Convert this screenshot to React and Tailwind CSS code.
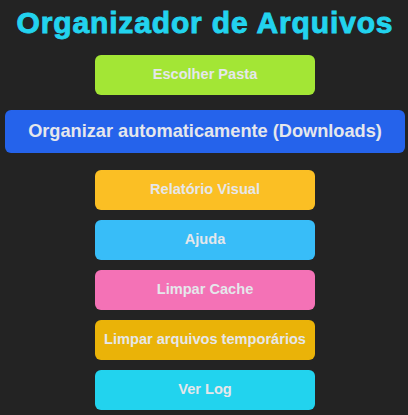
export default function App() {
  const btn =
    "w-[220px] h-10 rounded-md text-[14.6px] font-bold text-[#e5e7eb] flex items-center justify-center";
  return (
    <div className="w-[408px] h-[415px] bg-[#232323] flex flex-col items-center pt-[4px] pl-[2px]" style={{ fontFamily: '"Liberation Sans", Arial, sans-serif' }}>
      <h1 className="h-[38px] text-[30px] leading-[38px] font-bold text-[#22d3ee] tracking-[0.85px] [-webkit-text-stroke:0.9px_#22d3ee]">Organizador de Arquivos</h1>
      <button className={`${btn} mt-[13px] bg-[#a3e635]`}>Escolher Pasta</button>
      <button className="mt-[15px] w-[400px] h-[43px] rounded-md bg-[#2563eb] text-[18.2px] font-bold text-[#e5e7eb] flex items-center justify-center">
        Organizar automaticamente (Downloads)
      </button>
      <button className={`${btn} mt-[17px] bg-[#fbbf24]`}>Relatório Visual</button>
      <button className={`${btn} mt-[10px] bg-[#38bdf8]`}>Ajuda</button>
      <button className={`${btn} mt-[10px] bg-[#f472b6]`}>Limpar Cache</button>
      <button className={`${btn} mt-[10px] bg-[#eab308]`}>Limpar arquivos temporários</button>
      <button className={`${btn} mt-[10px] bg-[#22d3ee]`}>Ver Log</button>
    </div>
  );
}
